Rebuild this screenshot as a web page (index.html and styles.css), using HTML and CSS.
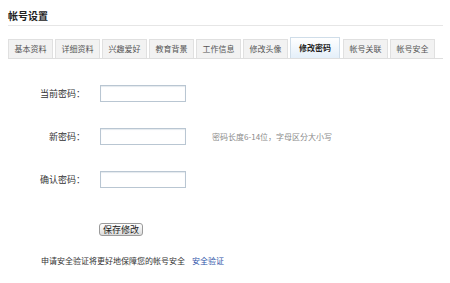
FILE: index.html
```html
<!DOCTYPE html>
<html lang="zh-CN">

<head>
    <meta charset="UTF-8">
    <title>帐号设置 - 修改密码</title>
    <link rel="stylesheet" href="styles.css">
</head>

<body>

    <h2 class="page-title">帐号设置</h2>

    <!-- Tabs -->
    <ul class="tabs">
        <li class="tab">基本资料</li>
        <li class="tab">详细资料</li>
        <li class="tab">兴趣爱好</li>
        <li class="tab">教育背景</li>
        <li class="tab">工作信息</li>
        <li class="tab">修改头像</li>
        <li class="tab active">修改密码</li>
        <li class="tab">帐号关联</li>
        <li class="tab">帐号安全</li>
    </ul>

    <!-- Password Form -->
    <form class="pwd-form">
        <div class="form-row">
            <label class="form-label">当前密码：</label>
            <input type="password" class="form-input">
        </div>
        <div class="form-row">
            <label class="form-label">新密码：</label>
            <input type="password" class="form-input">
            <span class="form-hint">密码长度6-14位，字母区分大小写</span>
        </div>
        <div class="form-row">
            <label class="form-label">确认密码：</label>
            <input type="password" class="form-input">
        </div>
        <div class="form-actions">
            <button type="button" class="save-btn">保存修改</button>
        </div>
    </form>

    <p class="security-tip">申请安全验证将更好地保障您的帐号安全<a href="#" class="security-link">安全验证</a></p>

</body>

</html>
```

FILE: styles.css
```css
body {
    font-family: "Noto Sans CJK SC", "Liberation Sans", sans-serif;
    background-color: #fff;
    color: #333;
    margin: 0;
    padding: 0 7px 0 8px;
}

.page-title {
    margin: 0;
    padding: 10px 0 3px;
    font-size: 10px;
    line-height: 12px;
    font-weight: bold;
    color: #222;
    border-bottom: 1px solid #e6e6e6;
}

.tabs {
    display: flex;
    align-items: flex-end;
    list-style: none;
    margin: 12px 0 0;
    padding: 0;
    height: 20px;
    border-bottom: 1px solid #dedede;
}

.tab {
    height: 18px;
    line-height: 18px;
    padding: 0 5.5px;
    margin-right: 2px;
    font-size: 8px;
    color: #555;
    background-color: #f2f2f2;
    border: 1px solid #e0e0e0;
    border-bottom: none;
    cursor: pointer;
}

.tab.active {
    height: 20px;
    line-height: 20px;
    padding: 0 8px;
    margin-right: 3px;
    font-weight: bold;
    color: #222;
    background: linear-gradient(#ffffff, #e4eff9);
    border-color: #cfdde9;
}

.pwd-form {
    margin: 26px 0 0;
}

.form-row {
    display: flex;
    align-items: center;
    height: 17px;
    margin-bottom: 26px;
}

.form-label {
    width: 92px;
    padding-right: 15px;
    box-sizing: border-box;
    text-align: right;
    font-size: 9px;
    color: #333;
}

.form-input {
    width: 86px;
    height: 17px;
    box-sizing: border-box;
    margin: 0;
    border: 1px solid #b9c6d2;
    box-shadow: inset 0 1px 1px #e4e9ee;
    padding: 0 3px;
}

.form-hint {
    margin-left: 26px;
    font-size: 8px;
    color: #8a8a8a;
}

.form-actions {
    margin-top: 7px;
    padding-left: 91px;
}

.save-btn {
    height: 13px;
    padding: 0 3px;
    font-family: inherit;
    font-size: 9px;
    line-height: 11px;
    color: #222;
    background: linear-gradient(#ffffff, #dcdcdc);
    border: 1px solid #9a9a9a;
    border-radius: 3px;
    cursor: pointer;
}

.security-tip {
    margin: 18px 0 0;
    padding-left: 33px;
    font-size: 8px;
    line-height: 10px;
    color: #333;
}

.security-link {
    margin-left: 7px;
    color: #2d54a8;
    text-decoration: none;
}
```
